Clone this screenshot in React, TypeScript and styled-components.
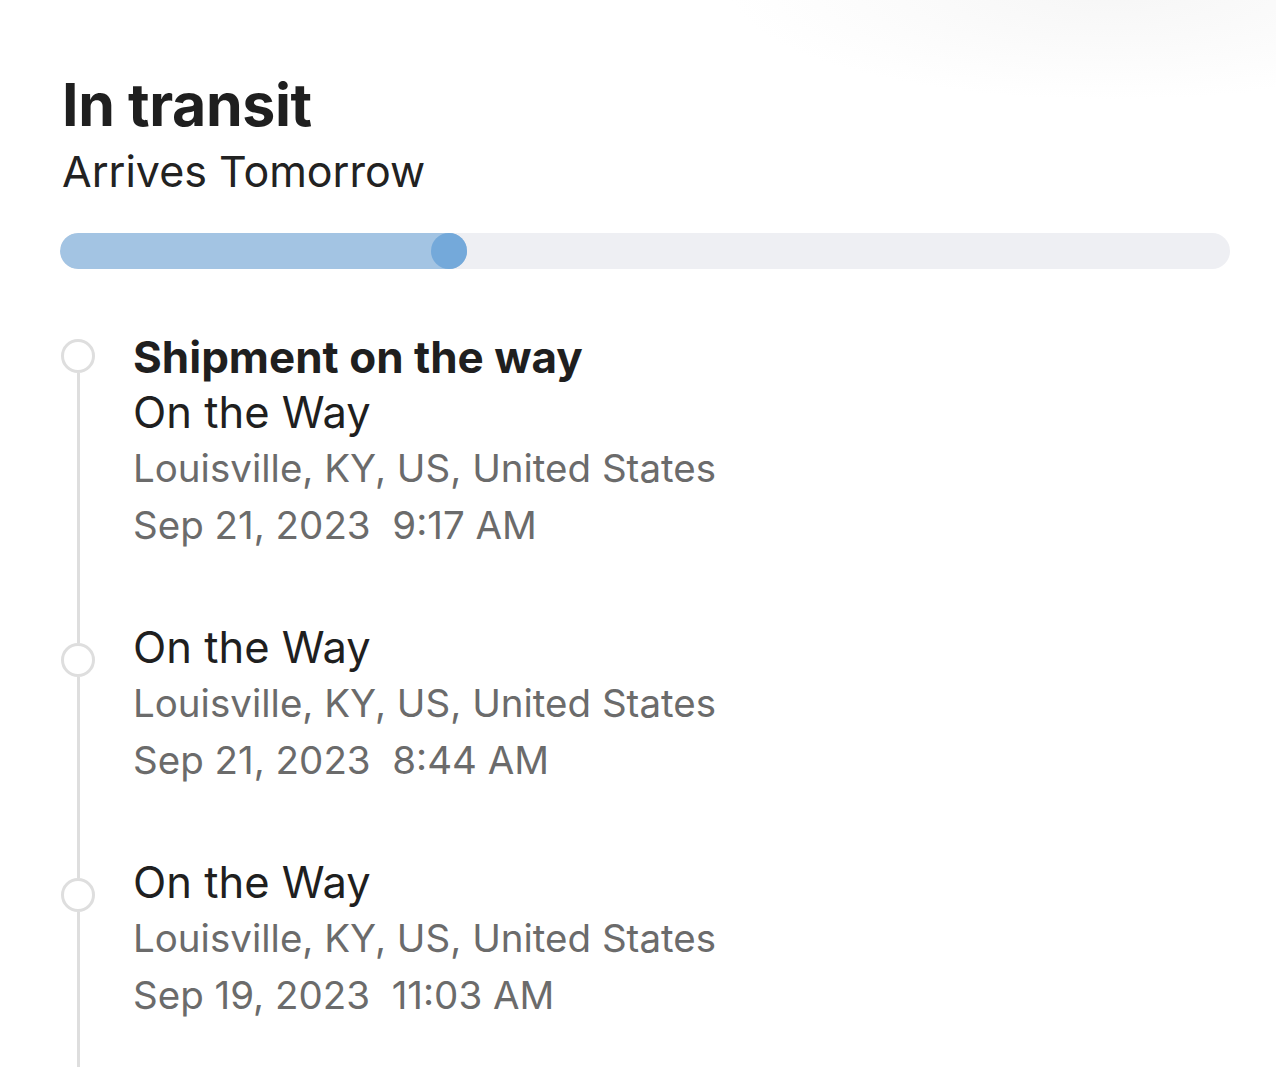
import React from 'react';
import styled, { createGlobalStyle } from 'styled-components';

type Event = {
  title?: string;
  status: string;
  place: string;
  date: string;
  time: string;
};

const events: Event[] = [
  {
    title: 'Shipment on the way',
    status: 'On the Way',
    place: 'Louisville, KY, US, United States',
    date: 'Sep 21, 2023',
    time: '9:17 AM',
  },
  {
    status: 'On the Way',
    place: 'Louisville, KY, US, United States',
    date: 'Sep 21, 2023',
    time: '8:44 AM',
  },
  {
    status: 'On the Way',
    place: 'Louisville, KY, US, United States',
    date: 'Sep 19, 2023',
    time: '11:03 AM',
  },
];

const GlobalStyle = createGlobalStyle`
  html, body {
    margin: 0;
    padding: 0;
    background: #ffffff;
  }
  body {
    font-family: Inter, "Noto Sans", "Liberation Sans", sans-serif;
    -webkit-font-smoothing: antialiased;
  }
`;

const Page = styled.div`
  height: 1067px;
  overflow: hidden;
  box-sizing: border-box;
  padding: 70px 46px 0 60px;
  background:
    radial-gradient(ellipse 380px 110px at 1110px -10px, #f6f6f6 0%, #fafafa 45%, rgba(255, 255, 255, 0) 100%),
    #ffffff;
`;

const Header = styled.header`
  padding-left: 2px;
`;

const Title = styled.h1`
  margin: 0;
  font-size: 59px;
  line-height: 70px;
  font-weight: 700;
  letter-spacing: -0.4px;
  color: #1f1f1f;
`;

const Subtitle = styled.div`
  font-size: 43px;
  line-height: 62px;
  font-weight: 400;
  color: #222222;
`;

const Track = styled.div`
  margin-top: 31px;
  height: 36px;
  border-radius: 18px;
  background: #eeeff3;
  overflow: hidden;
`;

const Fill = styled.div`
  height: 100%;
  border-radius: 18px;
  background: #a3c4e3;
  display: flex;
  justify-content: flex-end;
`;

const Knob = styled.div`
  width: 36px;
  height: 36px;
  border-radius: 50%;
  background: #74a9da;
  flex: none;
`;

const Timeline = styled.div`
  margin-top: 61px;
  display: flex;
  flex-direction: column;
`;

const Item = styled.div`
  display: grid;
  grid-template-columns: 36px 1fr;
  column-gap: 37px;
`;

const Rail = styled.div`
  display: flex;
  flex-direction: column;
  align-items: center;
`;

const Segment = styled.div<{ $hidden?: boolean; $height?: number }>`
  width: 3px;
  background: ${(p) => (p.$hidden ? 'transparent' : '#dedede')};
  ${(p) => (p.$height !== undefined ? `height: ${p.$height}px; flex: none;` : 'flex: 1;')}
`;

const Dot = styled.div`
  width: 34px;
  height: 34px;
  box-sizing: border-box;
  border-radius: 50%;
  border: 3px solid #dedede;
  background: #ffffff;
  flex: none;
`;

const Content = styled.div`
  padding-bottom: 66px;
`;

const EventTitle = styled.div`
  font-size: 44px;
  line-height: 55px;
  font-weight: 700;
  color: #1f1f1f;
`;

const Status = styled.div`
  font-size: 43.5px;
  line-height: 55px;
  color: #1f1f1f;
`;

const Meta = styled.div`
  font-size: 38.5px;
  line-height: 57px;
  color: #6b6b6b;
  white-space: pre;
`;

export default function App() {
  return (
    <>
      <GlobalStyle />
      <Page>
        <Header>
          <Title>In transit</Title>
          <Subtitle>Arrives Tomorrow</Subtitle>
        </Header>
        <Track>
          <Fill style={{ width: `${((467 - 60) / (1229 - 60)) * 100}%` }}>
            <Knob />
          </Fill>
        </Track>
        <Timeline>
          {events.map((e, i) => (
            <Item key={i}>
              <Rail>
                <Segment $hidden={i === 0} $height={e.title ? 9 : 23} />
                <Dot />
                <Segment />
              </Rail>
              <Content>
                {e.title && <EventTitle>{e.title}</EventTitle>}
                <Status>{e.status}</Status>
                <Meta>{e.place}</Meta>
                <Meta>{`${e.date}  ${e.time}`}</Meta>
              </Content>
            </Item>
          ))}
        </Timeline>
      </Page>
    </>
  );
}
